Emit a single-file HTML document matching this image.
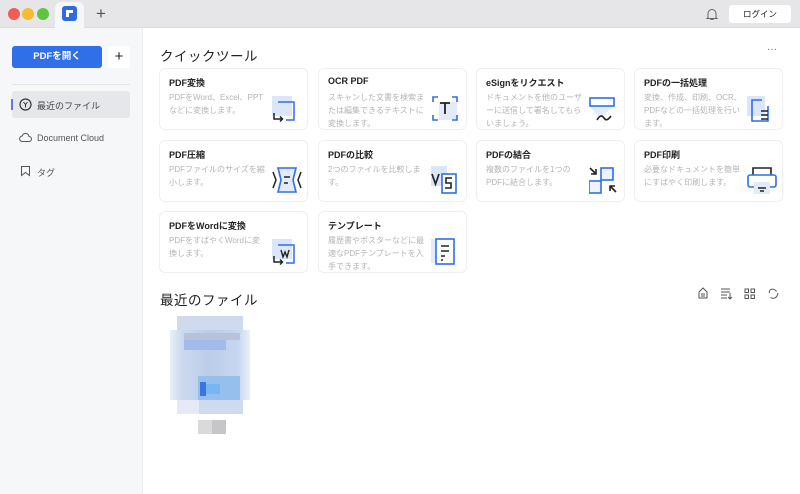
<!DOCTYPE html><html><head><meta charset="utf-8"><style>
*{margin:0;padding:0;box-sizing:border-box}
body{width:800px;height:494px;overflow:hidden;font-family:"Liberation Sans","Noto Sans CJK JP",sans-serif;background:#fff;position:relative;color:#222}
.a{position:absolute}
.tb{left:0;top:0;width:800px;height:28px;background:#e6e6e9;border-bottom:1px solid #dcdcde}
.dot{width:12px;height:12px;border-radius:50%;top:8px}
.side{left:0;top:28px;width:143px;height:466px;background:#f6f7f9;border-right:1px solid #ececee}
.card{width:149px;height:62px;background:#fff;border:1px solid #efeff1;border-radius:6px}
.card b{position:absolute;left:9px;top:7px;font-size:9px;font-weight:bold;color:#222}
.card p{position:absolute;left:9px;top:22px;width:98px;font-size:8px;line-height:13px;color:#b4b4b8}
.card svg{position:absolute;left:112px;top:25px}
.si{font-size:9px;color:#555;left:37px}
.h{font-size:13.5px;font-weight:normal;letter-spacing:0.5px}
</style></head><body>
<div class="a tb"></div>
<div class="a dot" style="left:8px;background:#ee5e56"></div>
<div class="a dot" style="left:22px;background:#f4bc2f"></div>
<div class="a dot" style="left:37px;background:#5fc53f"></div>
<div class="a" style="left:55px;top:2px;width:29px;height:27px;background:#f6f7f9;border-radius:6px 6px 0 0"></div>
<div class="a" style="left:62px;top:6px;width:15px;height:15px;background:#2c6be0;border-radius:3px"><div class="a" style="left:4px;top:4px;width:7px;height:7px;border-top:3px solid #fff;border-left:3px solid #fff"></div></div>
<div class="a" style="left:96px;top:4px;font-size:17px;color:#555">+</div>
<svg class="a" style="left:706px;top:8px" width="12" height="13" viewBox="0 0 12 13"><path d="M2 9.5V5.5a4 4 0 018 0v4l1 1H1z M4.5 11.5h3" fill="none" stroke="#666" stroke-width="1"/></svg>
<div class="a" style="left:729px;top:5px;width:62px;height:18px;background:#fff;border-radius:3px;font-size:8.5px;text-align:center;line-height:18px">ログイン</div>
<div class="a side"></div>
<div class="a" style="left:12px;top:46px;width:90px;height:22px;background:#2f6fe8;border-radius:3px;color:#fff;font-size:9.5px;font-weight:bold;text-align:center;line-height:22px">PDFを開く</div>
<div class="a" style="left:108px;top:46px;width:22px;height:22px;background:#fff;border-radius:3px;font-size:15px;text-align:center;line-height:21px">+</div>
<div class="a" style="left:12px;top:84px;width:118px;height:1px;background:#e6e6e8"></div>
<div class="a" style="left:12px;top:91px;width:118px;height:27px;background:#e6e7ea;border-radius:3px"></div>
<div class="a" style="left:11px;top:99px;width:2px;height:11px;background:#5b7fd0"></div>
<svg class="a" style="left:19px;top:98px" width="13" height="13"><circle cx="6.5" cy="6.5" r="5.5" fill="none" stroke="#333" stroke-width="1.2"/><path d="M4.5 4l2 2.5 2-2.5M6.5 6.5v3" fill="none" stroke="#333"/></svg>
<div class="a si" style="top:99px;color:#444">最近のファイル</div>
<svg class="a" style="left:19px;top:132px" width="13" height="11"><path d="M3.5 9.5h6.5a2.5 2.5 0 000-5 3.5 3.5 0 00-6.8-.5A2.6 2.6 0 003.5 9.5z" fill="none" stroke="#555"/></svg>
<div class="a si" style="top:133px">Document Cloud</div>
<svg class="a" style="left:20px;top:165px" width="11" height="12"><path d="M1.5 1.5h8v9l-4-3-4 3z" fill="none" stroke="#555"/></svg>
<div class="a si" style="top:166px">タグ</div>

<div class="a h" style="left:160px;top:45px">クイックツール</div>
<div class="a" style="left:767px;top:44px;font-size:10px;color:#666">···</div>

<div class="a card" style="left:159px;top:68px"><b>PDF変換</b><p>PDFをWord、Excel、PPTなどに変換します。</p><svg width="30" height="32"><rect x="0" y="2" width="20" height="20" fill="#dbe6fa"/><path d="M6 8h16v18h-8" fill="none" stroke="#2f6fe8" stroke-width="1.5"/><path d="M2 19v6h8M8 22.5l2.5 2.5-2.5 2.5" fill="none" stroke="#222" stroke-width="1.5"/></svg></div>
<div class="a card" style="left:318px;top:68px"><b>OCR PDF</b><p>スキャンした文書を検索または編集できるテキストに変換します。</p><svg width="30" height="32"><rect x="8" y="8" width="18" height="18" fill="#e3ebfb"/><path d="M2 8V3h5M21 3h5v5M2 21v5h5M21 26h5v-5" fill="none" stroke="#2f6fe8" stroke-width="1.6"/><path d="M9 9h10M14 9v11" stroke="#222" stroke-width="1.8"/></svg></div>
<div class="a card" style="left:476px;top:68px"><b>eSignをリクエスト</b><p>ドキュメントを他のユーザーに送信して署名してもらいましょう。</p><svg width="30" height="32"><path d="M0 12h25l-14 12z" fill="#e3ebfb"/><rect x="1" y="4" width="24" height="8" fill="none" stroke="#2f6fe8" stroke-width="1.6"/><path d="M8 26c3-5 5-5 7-2s4 2 7-2" fill="none" stroke="#222" stroke-width="1.6"/></svg></div>
<div class="a card" style="left:634px;top:68px"><b>PDFの一括処理</b><p>変換、作成、印刷、OCR、PDFなどの一括処理を行います。</p><svg width="30" height="32"><rect x="0" y="2" width="18" height="20" fill="#dbe6fa"/><path d="M15 6H5v21h16V12" fill="none" stroke="#2f6fe8" stroke-width="1.6"/><path d="M14 17h7M14 21h7M14 25h7" stroke="#222" stroke-width="1.6"/></svg></div>

<div class="a card" style="left:159px;top:140px"><b>PDF圧縮</b><p>PDFファイルのサイズを縮小します。</p><svg width="30" height="32"><path d="M6 2h18l-3 12 3 12H6l3-12z" fill="#e3ebfb" stroke="#2f6fe8" stroke-width="1.6"/><path d="M1 6l3 8-3 8M29 6l-3 8 3 8" fill="none" stroke="#222" stroke-width="1.5"/><path d="M12 11h6M12 17h4" stroke="#222" stroke-width="1.6"/></svg></div>
<div class="a card" style="left:318px;top:140px"><b>PDFの比較</b><p>2つのファイルを比較します。</p><svg width="30" height="32"><rect x="0" y="0" width="16" height="20" fill="#dbe6fa"/><rect x="11" y="8" width="14" height="19" fill="#fff" stroke="#2f6fe8" stroke-width="1.6"/><path d="M1 8l3.5 10L8 8" fill="none" stroke="#222" stroke-width="1.7"/><path d="M21 12h-6v5h5v5h-6" fill="none" stroke="#222" stroke-width="1.6"/></svg></div>
<div class="a card" style="left:476px;top:140px"><b>PDFの結合</b><p>複数のファイルを1つのPDFに結合します。</p><svg width="30" height="32"><rect x="12" y="2" width="12" height="12" fill="#eef3fd" stroke="#2f6fe8" stroke-width="1.6"/><rect x="0" y="15" width="12" height="12" fill="#eef3fd" stroke="#2f6fe8" stroke-width="1.6"/><path d="M1 2l6 6M7 3v5H2M27 26l-6-6M21 25v-5h5" fill="none" stroke="#222" stroke-width="1.6"/></svg></div>
<div class="a card" style="left:634px;top:140px"><b>PDF印刷</b><p>必要なドキュメントを簡単にすばやく印刷します。</p><svg width="32" height="32"><path d="M6 9V2h18v7" fill="none" stroke="#222" stroke-width="1.6"/><rect x="1" y="9" width="28" height="12" rx="2" fill="#fff" stroke="#2f6fe8" stroke-width="1.6"/><rect x="7" y="16" width="16" height="12" fill="#e3ebfb"/><path d="M11 22h8M13 25h4" stroke="#222" stroke-width="1.4"/></svg></div>

<div class="a card" style="left:159px;top:211px"><b>PDFをWordに変換</b><p>PDFをすばやくWordに変換します。</p><svg width="30" height="32"><rect x="0" y="2" width="20" height="20" fill="#dbe6fa"/><path d="M6 8h16v18h-8" fill="none" stroke="#2f6fe8" stroke-width="1.5"/><path d="M9 13l2 7 2-5 2 5 2-7" fill="none" stroke="#222" stroke-width="1.4"/><path d="M2 19v6h8M8 22.5l2.5 2.5-2.5 2.5" fill="none" stroke="#222" stroke-width="1.5"/></svg></div>
<div class="a card" style="left:318px;top:211px"><b>テンプレート</b><p>履歴書やポスターなどに最適なPDFテンプレートを入手できます。</p><svg width="30" height="32"><rect x="0" y="2" width="12" height="24" fill="#e3ebfb"/><rect x="5" y="2" width="18" height="25" fill="#fff" stroke="#2f6fe8" stroke-width="1.6"/><path d="M10 9h8M10 14h8M10 19h4M10 23h2" stroke="#222" stroke-width="1.6"/></svg></div>

<div class="a h" style="left:160px;top:289px">最近のファイル</div>
<svg class="a" style="left:696px;top:286px" width="90" height="14" fill="none" stroke="#555" stroke-width="1"><path d="M3 12V6l4-4 4 4v6zM5 8h4M5 10h4"/><path d="M25 3h9M25 6h9M25 9h6M25 12h6M34 7v6M32 11l2 2 2-2"/><rect x="49" y="3" width="3.5" height="3.5"/><rect x="55" y="3" width="3.5" height="3.5"/><rect x="49" y="9" width="3.5" height="3.5"/><rect x="55" y="9" width="3.5" height="3.5"/><path d="M74 4a4.5 4.5 0 016.5 1.5M81 10a4.5 4.5 0 01-6.5 1.5M74 4l-1 3M81 10l1-3"/></svg>

<div class="a" style="left:177px;top:316px;width:66px;height:98px;background:#cfdaef"></div>
<div class="a" style="left:170px;top:330px;width:80px;height:70px;background:linear-gradient(90deg,#eaeff9,#cbd8ef 15%,#bccde9 50%,#c7d6f0 85%,#ebf0f9)"></div>
<div class="a" style="left:184px;top:333px;width:56px;height:7px;background:#b8c3da"></div>
<div class="a" style="left:184px;top:340px;width:42px;height:10px;background:#9fbcea"></div>
<div class="a" style="left:198px;top:376px;width:42px;height:24px;background:#97bfee"></div>
<div class="a" style="left:200px;top:382px;width:6px;height:14px;background:#3a75e0"></div>
<div class="a" style="left:206px;top:384px;width:14px;height:10px;background:#78b6f2"></div>
<div class="a" style="left:177px;top:400px;width:22px;height:14px;background:#e5eaf6"></div>
<div class="a" style="left:198px;top:420px;width:14px;height:14px;background:#dadadc"></div>
<div class="a" style="left:212px;top:420px;width:14px;height:14px;background:#c6c6c8"></div>
</body></html>
